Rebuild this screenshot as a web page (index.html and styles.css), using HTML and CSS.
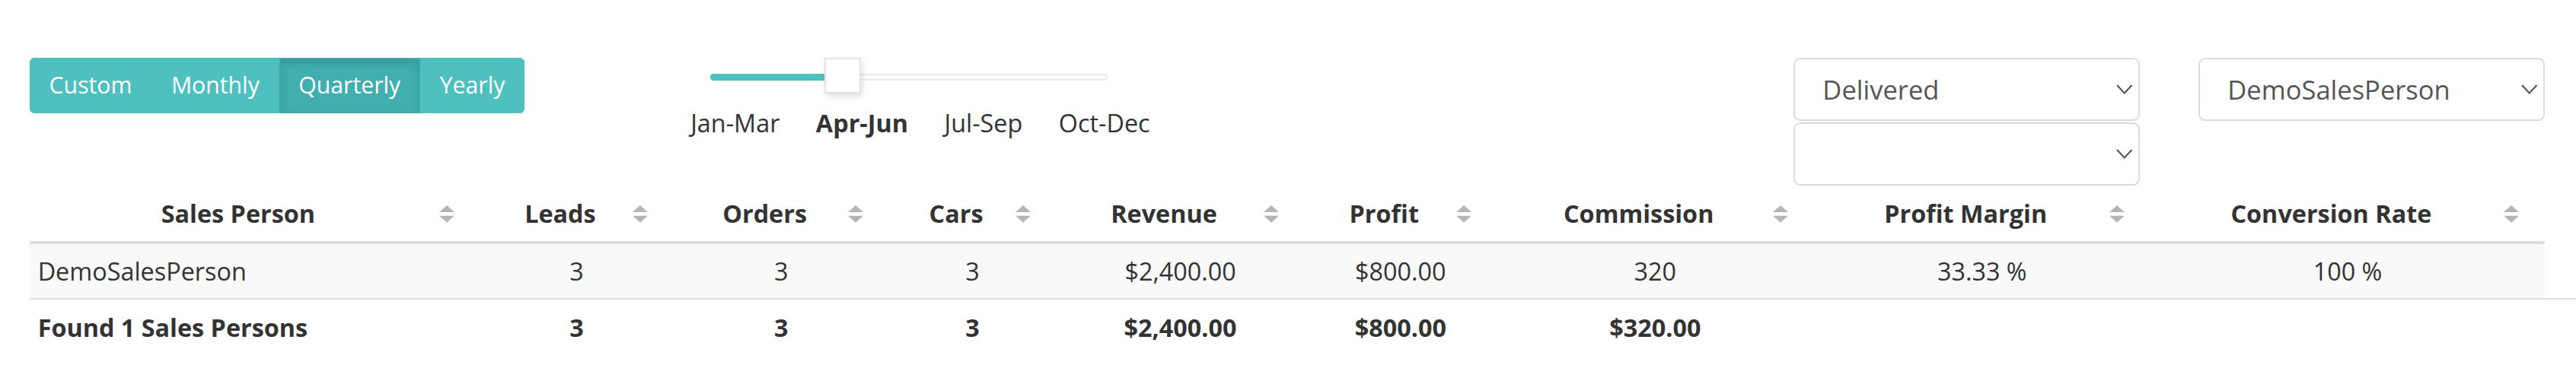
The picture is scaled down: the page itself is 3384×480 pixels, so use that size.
FILE: index.html
```html
<!DOCTYPE html>
<html lang="en">
<head>
<meta charset="utf-8">
<title>Sales Persons</title>
<link rel="stylesheet" href="styles.css">
</head>
<body>
<div class="page">
  <div class="toolbar">
    <div class="btn-group">
      <button class="btn">Custom</button>
      <button class="btn">Monthly</button>
      <button class="btn active">Quarterly</button>
      <button class="btn">Yearly</button>
    </div>

    <div class="range">
      <div class="range-track">
        <div class="range-rail"><div class="range-fill" style="width:33.333%"></div></div>
        <div class="range-handle" style="left:33.333%"></div>
      </div>
      <div class="range-labels">
        <span>Jan-Mar</span>
        <span class="current">Apr-Jun</span>
        <span>Jul-Sep</span>
        <span>Oct-Dec</span>
      </div>
    </div>

    <div class="filters">
      <div class="select-stack">
        <div class="select-box">
          <select class="select"><option>Delivered</option></select>
          <svg class="chevron" viewBox="0 0 10 6"><polyline points="0.5,0.5 5,5.3 9.5,0.5"/></svg>
        </div>
        <div class="select-box">
          <select class="select"><option></option></select>
          <svg class="chevron" viewBox="0 0 10 6"><polyline points="0.5,0.5 5,5.3 9.5,0.5"/></svg>
        </div>
      </div>
      <div class="select-box">
        <select class="select"><option>DemoSalesPerson</option></select>
        <svg class="chevron" viewBox="0 0 10 6"><polyline points="0.5,0.5 5,5.3 9.5,0.5"/></svg>
      </div>
    </div>
  </div>

  <table class="grid">
    <colgroup>
      <col class="c-name"><col class="c-leads"><col class="c-orders"><col class="c-cars"><col class="c-revenue"><col class="c-profit"><col class="c-comm"><col class="c-margin"><col class="c-conv">
    </colgroup>
    <thead>
      <tr>
        <th>Sales Person<svg class="sort" viewBox="0 0 20 24"><path d="M0 9L10 0L20 9ZM0 14L20 14L10 23Z"/></svg></th>
        <th>Leads<svg class="sort" viewBox="0 0 20 24"><path d="M0 9L10 0L20 9ZM0 14L20 14L10 23Z"/></svg></th>
        <th>Orders<svg class="sort" viewBox="0 0 20 24"><path d="M0 9L10 0L20 9ZM0 14L20 14L10 23Z"/></svg></th>
        <th>Cars<svg class="sort" viewBox="0 0 20 24"><path d="M0 9L10 0L20 9ZM0 14L20 14L10 23Z"/></svg></th>
        <th>Revenue<svg class="sort" viewBox="0 0 20 24"><path d="M0 9L10 0L20 9ZM0 14L20 14L10 23Z"/></svg></th>
        <th>Profit<svg class="sort" viewBox="0 0 20 24"><path d="M0 9L10 0L20 9ZM0 14L20 14L10 23Z"/></svg></th>
        <th>Commission<svg class="sort" viewBox="0 0 20 24"><path d="M0 9L10 0L20 9ZM0 14L20 14L10 23Z"/></svg></th>
        <th>Profit Margin<svg class="sort" viewBox="0 0 20 24"><path d="M0 9L10 0L20 9ZM0 14L20 14L10 23Z"/></svg></th>
        <th>Conversion Rate<svg class="sort" viewBox="0 0 20 24"><path d="M0 9L10 0L20 9ZM0 14L20 14L10 23Z"/></svg></th>
      </tr>
    </thead>
    <tbody>
      <tr>
        <td class="name">DemoSalesPerson</td>
        <td>3</td>
        <td>3</td>
        <td>3</td>
        <td>$2,400.00</td>
        <td>$800.00</td>
        <td>320</td>
        <td>33.33 %</td>
        <td>100 %</td>
      </tr>
    </tbody>
  </table>

  <table class="grid-foot">
    <colgroup>
      <col class="c-name"><col class="c-leads"><col class="c-orders"><col class="c-cars"><col class="c-revenue"><col class="c-profit"><col class="c-comm"><col class="c-margin"><col class="c-conv-wide">
    </colgroup>
    <tfoot>
      <tr>
        <td class="name">Found 1 Sales Persons</td>
        <td>3</td>
        <td>3</td>
        <td>3</td>
        <td>$2,400.00</td>
        <td>$800.00</td>
        <td>$320.00</td>
        <td></td>
        <td></td>
      </tr>
    </tfoot>
  </table>
</div>
</body>
</html>
```

FILE: styles.css
```css
html {
  zoom: 2.15816;
}

body {
  margin: 0;
  background: #fff;
  color: #333;
  font-family: "Open Sans", "Noto Sans", sans-serif;
  font-size: 15px;
  overflow: hidden;
}

.page {
  padding: 35px 19px 0 18px;
}

/* ---------- toolbar ---------- */
.toolbar {
  display: flex;
  align-items: flex-start;
}

.btn-group {
  display: flex;
  border-radius: 3px;
  overflow: hidden;
}

.btn {
  margin: 0;
  padding: 6px 11px;
  border: 1px solid #4ec0c0;
  background: #4ec0c0;
  color: #fff;
  font-family: "Open Sans", sans-serif;
  font-size: 14px;
  line-height: 20px;
  cursor: pointer;
}

.btn.active {
  background: #41afaf;
  border-color: #3eaaaa;
  box-shadow: inset 0 3px 5px rgba(0, 0, 0, 0.125);
}

/* ---------- range slider ---------- */
.range {
  margin-left: 101px;
  display: flex;
  flex-direction: column;
}

.range-track {
  position: relative;
  width: 242px;
  height: 22px;
  margin-left: 12px;
}

.range-rail {
  margin-top: 10px;
  height: 4px;
  border-radius: 3px;
  background: #fff;
  box-shadow: inset 0 0 0 1px #ebebeb;
}

.range-fill {
  height: 100%;
  border-radius: 3px;
  background: #4ec0c0;
}

.range-handle {
  position: absolute;
  top: 0;
  width: 22px;
  height: 22px;
  margin-left: -11px;
  box-sizing: border-box;
  background: #fff;
  border: 1px solid #e4e4e4;
  box-shadow: 1px 2px 4px rgba(0, 0, 0, 0.12);
}

.range-labels {
  display: flex;
  gap: 22px;
  margin-top: 8px;
  font-size: 15px;
  line-height: 20px;
}

.range-labels .current {
  font-weight: 700;
}

/* ---------- selects ---------- */
.filters {
  margin-left: auto;
  display: flex;
  gap: 35.5px;
}

.select-stack {
  display: flex;
  flex-direction: column;
  gap: 1px;
}

.select-box {
  position: relative;
  width: 211px;
  height: 38.5px;
}

.select {
  display: block;
  width: 100%;
  height: 100%;
  margin: 0;
  padding: 0 28px 0 17px;
  box-sizing: border-box;
  border: 1px solid #dcdcdc;
  border-radius: 4px;
  background: #fff;
  color: #555;
  font-family: "Open Sans", sans-serif;
  font-size: 16px;
  -webkit-appearance: none;
  appearance: none;
  outline: none;
}

.chevron {
  position: absolute;
  right: 4.5px;
  top: 50%;
  width: 10px;
  height: 6px;
  margin-top: -3px;
  fill: none;
  stroke: #555;
  stroke-width: 1;
  pointer-events: none;
}

/* ---------- table ---------- */
.grid,
.grid-foot {
  table-layout: fixed;
  border-collapse: collapse;
  border-spacing: 0;
}

.grid {
  width: 1531px;
}

.grid-foot {
  width: 1550px;
  border-top: 1px solid #dedede;
}

.c-name { width: 274px; }
.c-leads { width: 118px; }
.c-orders { width: 131px; }
.c-cars { width: 102px; }
.c-revenue { width: 151px; }
.c-profit { width: 117px; }
.c-comm { width: 193px; }
.c-margin { width: 205px; }
.c-conv { width: 240px; }
.c-conv-wide { width: 259px; }

.grid th {
  position: relative;
  padding: 8px 28px 8px 8px;
  border-bottom: 2px solid #dddddd;
  font-size: 15px;
  font-weight: 700;
  line-height: 18px;
  text-align: center;
  white-space: nowrap;
}

.sort {
  position: absolute;
  right: 15.5px;
  top: 50%;
  width: 9.3px;
  height: 11px;
  margin-top: -5px;
  fill: #b5b5b5;
}

.grid td,
.grid-foot td {
  padding: 8px 5px;
  font-size: 15px;
  line-height: 17px;
  text-align: center;
  white-space: nowrap;
}

.grid td {
  background: #f9f9f9;
}

.grid-foot td {
  font-weight: 700;
}

.grid td.name,
.grid-foot td.name {
  text-align: left;
}
```
